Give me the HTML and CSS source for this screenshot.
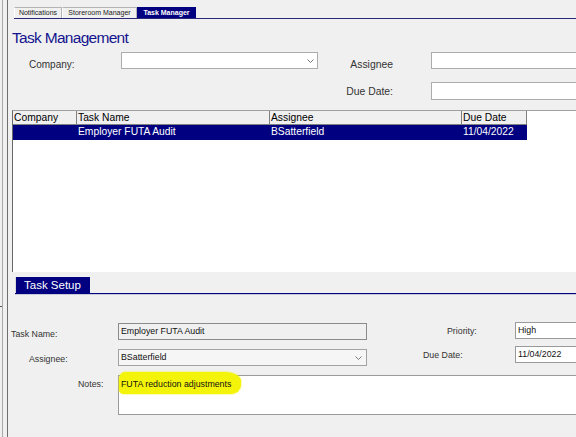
FILE: index.html
```html
<!DOCTYPE html>
<html lang="en">
<head>
<meta charset="utf-8">
<title>Task Manager</title>
<link rel="stylesheet" href="styles.css">
</head>
<body>
<div class="shell">
  <div class="rail"><div class="rail-tick"></div></div>
  <div class="panel">
    <div class="tabstrip">
      <div class="tab tab-notify">Notifications</div>
      <div class="tab tab-store">Storeroom Manager</div>
      <div class="tab tab-task is-active">Task Manager</div>
    </div>

    <h1 class="title">Task Management</h1>

    <div class="filters">
      <label class="f-label f-company f-low">Company:</label>
      <div class="field select f-company-box">
        <span class="select-value"></span>
        <svg class="chevron" width="7" height="4" viewBox="0 0 7 4"><path d="M0.5 0.5 L3.5 3.5 L6.5 0.5" fill="none" stroke="#7a7a7a" stroke-width="1"/></svg>
      </div>
      <label class="f-label f-right f-assignee f-low">Assignee</label>
      <div class="field f-input f-assignee-box"></div>
      <label class="f-label f-right f-due">Due Date:</label>
      <div class="field f-input f-due-box tall"></div>
    </div>

    <div class="grid">
      <div class="grid-row grid-head">
        <div class="cell">Company</div>
        <div class="cell">Task Name</div>
        <div class="cell">Assignee</div>
        <div class="cell">Due Date</div>
      </div>
      <div class="grid-row grid-selected">
        <div class="cell"></div>
        <div class="cell">Employer FUTA Audit</div>
        <div class="cell">BSatterfield</div>
        <div class="cell">11/04/2022</div>
      </div>
    </div>

    <div class="setup-tabs">
      <div class="setup-tab">Task Setup</div>
    </div>

    <div class="setup">
      <div class="setup-top">
        <div class="col-left">
          <div class="row">
            <label class="lbl lbl-name">Task Name:</label>
            <div class="box readonly">Employer FUTA Audit</div>
          </div>
          <div class="row">
            <label class="lbl lbl-assignee">Assignee:</label>
            <div class="box combo">
              <span>BSatterfield</span>
              <svg class="chevron" width="7" height="4" viewBox="0 0 7 4"><path d="M0.5 0.5 L3.5 3.5 L6.5 0.5" fill="none" stroke="#7a7a7a" stroke-width="1"/></svg>
            </div>
          </div>
        </div>
        <div class="col-right">
          <div class="row">
            <label class="lbl-r lbl-priority">Priority:</label>
            <div class="box edit">High</div>
          </div>
          <div class="row">
            <label class="lbl-r lbl-due">Due Date:</label>
            <div class="box edit">11/04/2022</div>
          </div>
        </div>
      </div>
      <div class="row notes-row">
        <label class="lbl lbl-notes">Notes:</label>
        <div class="notes"><span class="marked">FUTA reduction adjustments</span></div>
      </div>
    </div>
  </div>
</div>
</body>
</html>
```
FILE: styles.css
```css
html, body {
  margin: 0;
  padding: 0;
}

body {
  width: 576px;
  height: 437px;
  overflow: hidden;
  background: #f0f0f0;
  font-family: "Liberation Sans", Arial, sans-serif;
  color: #000;
}

.shell {
  display: flex;
  height: 437px;
}

/* outer frame edge on the far left */
.rail {
  width: 2px;
  border-right: 1px solid #a9a9a9;
  flex: none;
}

.rail-tick {
  margin-top: 306px;
  width: 2px;
  height: 1px;
  background: #555;
}

.panel {
  flex: 1;
  margin-left: 4px;
  border-left: 1px solid #6e6e6e;
  overflow: hidden;
  min-width: 0;
}

/* top application tabs */
.tabstrip {
  display: flex;
  margin: 7px 0 0 6px;
  height: 11px;
  border-bottom: 1px solid #2a2a78;
}

.tab {
  box-sizing: border-box;
  height: 11px;
  border: 1px solid #b4b4b4;
  border-bottom: none;
  border-left-color: #fff;
  font-size: 7px;
  line-height: 10px;
  text-align: center;
  color: #222;
  background: #f0f0f0;
}

.tab-notify { width: 48px; }
.tab-store { width: 75px; }
.tab-task { width: 59px; }

.tab.is-active {
  background: #000080;
  color: #fff;
  font-weight: bold;
  border-color: #000080;
}

.title {
  margin: 10px 0 0 4px;
  font-size: 15.5px;
  line-height: 17px;
  font-weight: normal;
  letter-spacing: -0.7px;
  color: #14148e;
}

/* filter fields */
.filters {
  display: grid;
  grid-template-columns: 21px 92px 197px 75px 38px 160px;
  grid-template-rows: 17px 18px;
  row-gap: 13px;
  margin-top: 6px;
}

.f-label {
  font-size: 10px;
  color: #333;
  line-height: 17px;
  align-self: center;
}

/* first-row captions sit a little below their boxes */
.f-low {
  align-self: start;
  margin-top: 4px;
}

.f-company { grid-column: 2; grid-row: 1; }
.f-company-box { grid-column: 3; grid-row: 1; }
.f-assignee { grid-column: 4; grid-row: 1; }
.f-assignee-box { grid-column: 6; grid-row: 1; }
.f-due { grid-column: 4; grid-row: 2; }
.f-due-box { grid-column: 6; grid-row: 2; }

.f-right {
  text-align: right;
  font-size: 10.4px;
}

.field {
  box-sizing: border-box;
  background: #fff;
  border: 1px solid #acacac;
}

.select {
  display: flex;
  align-items: center;
  justify-content: flex-end;
  padding-right: 3px;
}

.chevron {
  display: block;
  flex: none;
}

/* results list */
.grid {
  box-sizing: border-box;
  margin: 10px 0 0 4px;
  height: 162px;
  background: #fff;
  border-left: 1px solid #6a6a6a;
  border-top: 1px solid #a0a0a0;
  font-size: 10.3px;
}

.grid-row {
  display: grid;
  grid-template-columns: 64px 193px 192px 65px;
}

.cell {
  box-sizing: border-box;
  padding-left: 1px;
  white-space: nowrap;
  overflow: hidden;
}

.grid-head .cell {
  height: 14px;
  line-height: 13px;
  background: #f0f0f0;
  border-right: 1px solid #808080;
  border-bottom: 1px solid #808080;
  color: #000;
}

.grid-selected .cell {
  height: 15px;
  line-height: 14px;
  background: #000080;
  color: #fff;
}

/* detail section */
.setup-tabs {
  display: flex;
  margin: 5px 0 0 7px;
  border-bottom: 1px solid #000080;
  box-shadow: 0 1px 0 #c8c8d6;
}

.setup-tab {
  box-sizing: border-box;
  width: 75px;
  height: 16px;
  padding-left: 8px;
  background: #000080;
  border-left: 1px solid #d8d8d8;
  color: #fff;
  font-size: 11.5px;
  line-height: 16px;
}

.setup {
  padding-top: 29px;
  font-size: 8.8px;
}

.setup-top {
  display: flex;
}

.col-left {
  display: flex;
  flex-direction: column;
  gap: 9px;
  width: 359px;
  flex: none;
}

.col-right {
  display: flex;
  flex-direction: column;
  gap: 7px;
  margin-top: -1px;
  flex: 1;
}

.row {
  display: flex;
  height: 17px;
}

.lbl {
  box-sizing: border-box;
  width: 110px;
  flex: none;
  line-height: 17px;
  color: #333;
  padding-top: 1px;
}

.lbl-name { padding-left: 3px; padding-top: 3px; }
.lbl-assignee { padding-left: 21px; padding-top: 2px; }
.lbl-notes { padding-left: 70px; padding-top: 1px; }

.lbl-r {
  box-sizing: border-box;
  width: 148px;
  flex: none;
  line-height: 17px;
  color: #333;
}

.lbl-priority { padding-left: 80px; padding-top: 1px; }
.lbl-due { padding-left: 56px; padding-top: 1px; }

.box {
  box-sizing: border-box;
  height: 17px;
  line-height: 15px;
  padding-left: 2px;
  border: 1px solid #a2a2a2;
  color: #111;
  white-space: nowrap;
}

.readonly {
  width: 249px;
  background: #f0f0f0;
  border-color: #8c8c8c;
}

.combo {
  width: 249px;
  background: #f6f6f6;
  display: flex;
  align-items: center;
  justify-content: space-between;
  padding-right: 4px;
}

.edit {
  width: 80px;
  background: #fff;
  border-color: #9a9a9a;
}

.notes-row {
  margin-top: 9px;
  height: 40px;
}

.notes {
  box-sizing: border-box;
  flex: none;
  width: 470px;
  height: 40px;
  background: #fff;
  border: 1px solid #9a9a9a;
  padding: 2px 0 0 2px;
  line-height: 13px;
  color: #111;
}

/* highlighter stroke over the note text */
.marked {
  display: inline-block;
  margin: -6px 0 0 -2px;
  padding: 6px 10px 3px 2px;
  background: #f4f40a;
  border-radius: 6px 16px 10px 4px / 8px 9px 9px 5px;
  box-shadow: 0 0 2px #f4f40a;
}
```
